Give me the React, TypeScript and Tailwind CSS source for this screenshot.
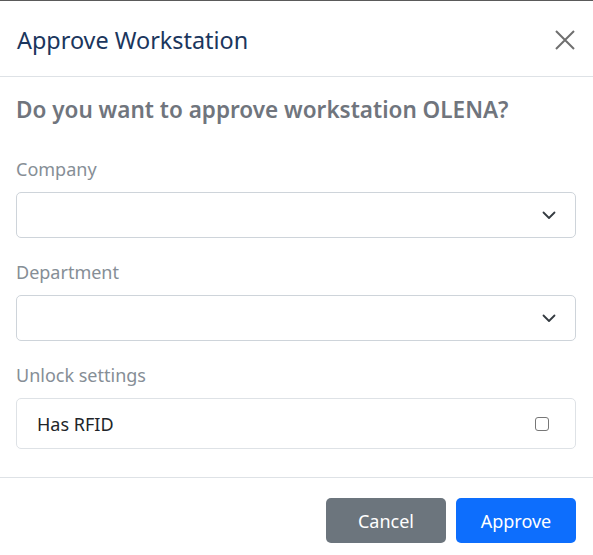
import React from "react";

function Chevron() {
  return (
    <svg width="16" height="16" viewBox="0 0 16 16" fill="none">
      <path d="M2.5 5.5 8 11l5.5-5.5" stroke="#343a40" strokeWidth="1.8" strokeLinecap="round" strokeLinejoin="round" />
    </svg>
  );
}

export default function App() {
  const font = { fontFamily: '"Noto Sans", "Open Sans", sans-serif' };
  return (
    <div className="w-[593px] h-[555px] bg-white border-t border-[#5a5a5a] flex flex-col" style={font}>
      <div className="h-[76px] shrink-0 border-b border-[#dee2e6] flex items-center justify-between pl-[17px] pr-[17px]">
        <h5 className="text-[23.4px] leading-none text-[#1b365d] font-normal mt-[4px]">Approve Workstation</h5>
        <svg width="22" height="22" viewBox="0 0 22 22" className="mt-[2px]">
          <path d="M2 2 20 20M20 2 2 20" stroke="#6f6f6f" strokeWidth="2" />
        </svg>
      </div>
      <div className="pl-4 pr-[17px] pt-[20px] h-[401px] shrink-0 border-b border-[#dee2e6] flex flex-col">
        <div className="text-[22.5px] leading-[26px] font-semibold text-[#70757d]">Do you want to approve workstation OLENA?</div>
        <label className="mt-[33px] text-[18px] leading-[27px] text-[#868e96]">Company</label>
        <div className="mt-[9px] h-[46px] border border-[#ced4da] rounded-[5px] flex items-center justify-end pr-[18px]">
          <Chevron />
        </div>
        <label className="mt-[21px] text-[18px] leading-[27px] text-[#868e96]">Department</label>
        <div className="mt-[9px] h-[46px] border border-[#ced4da] rounded-[5px] flex items-center justify-end pr-[18px]">
          <Chevron />
        </div>
        <label className="mt-[21px] text-[18px] leading-[27px] text-[#868e96]">Unlock settings</label>
        <div className="mt-[9px] h-[51px] border border-[#dee2e6] rounded-[5px] flex items-center justify-between pl-[20px] pr-[26px]">
          <span className="text-[18px] text-[#212529] mt-[1px]">Has RFID</span>
          <span className="w-[14px] h-[14px] border border-[#777] rounded-[3px] bg-white" />
        </div>
      </div>
      <div className="flex justify-end gap-[10px] pt-[20px] pr-[17px]">
        <button className="w-[120px] h-[45px] rounded-[5px] bg-[#6c757d] text-white text-[18px] pt-[1px]">Cancel</button>
        <button className="w-[120px] h-[45px] rounded-[5px] bg-[#0d6efd] text-white text-[18px] pt-[1px]">Approve</button>
      </div>
    </div>
  );
}
